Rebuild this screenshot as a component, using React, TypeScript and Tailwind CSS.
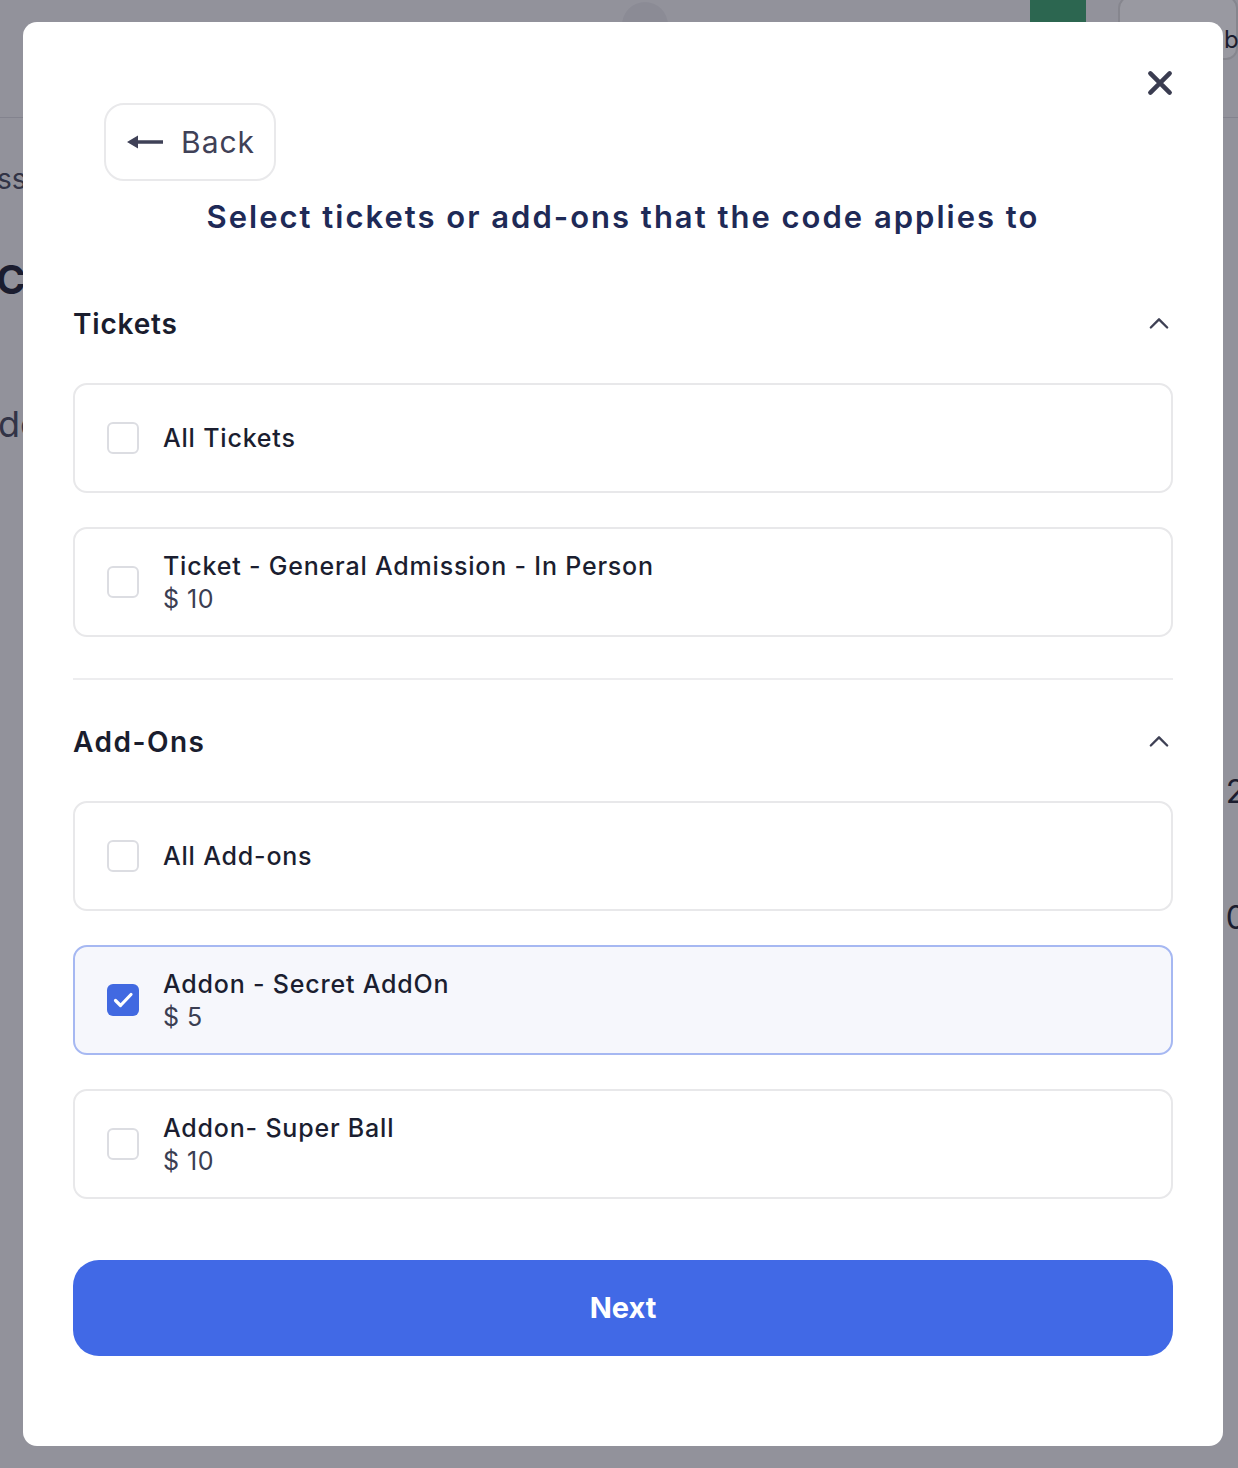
import React from "react";

const font = { fontFamily: "Inter, 'Noto Sans', sans-serif" };

function Checkbox({ checked }: { checked: boolean }) {
  return checked ? (
    <div className="w-8 h-8 rounded-[6px] bg-[#4169e1] flex items-center justify-center shrink-0">
      <svg width="32" height="32" viewBox="0 0 32 32" fill="none" stroke="white" strokeWidth="3.2" strokeLinecap="round" strokeLinejoin="round">
        <path d="M8.5 16.5l5 5L24 10.5" />
      </svg>
    </div>
  ) : (
    <div className="w-8 h-8 rounded-[6px] border-2 border-[#dcdde2] bg-white shrink-0" />
  );
}

function Option({ title, price, checked }: { title: string; price?: string; checked?: boolean }) {
  return (
    <div
      className={
        "h-[110px] rounded-[14px] border-2 flex items-center px-[32px] gap-[24px] " +
        (checked ? "border-[#a6b8f2] bg-[#f6f7fc]" : "border-[#e8e8ea] bg-white")
      }
    >
      <Checkbox checked={!!checked} />
      <div className="flex flex-col">
        <div className="text-[25px] leading-[34px] font-medium text-[#1b1e30] tracking-[0.8px]">{title}</div>
        {price && <div className="text-[25px] leading-[32px] text-[#3b3e52] tracking-[0.5px]">{price}</div>}
      </div>
    </div>
  );
}

function Chevron() {
  return (
    <svg width="28" height="28" viewBox="0 0 24 24" fill="none" stroke="#3e4054" strokeWidth="2" strokeLinecap="round" strokeLinejoin="round">
      <path d="M5 15l7-7 7 7" />
    </svg>
  );
}

export default function App() {
  return (
    <div className="relative w-[1238px] h-[1468px] bg-[#f3f3f5] overflow-hidden" style={font}>
      {/* background page */}
      <div className="absolute inset-0 flex flex-col">
        <div className="h-[118px] border-b border-[#d8d8dc] flex items-start justify-end gap-8">
          <div className="w-[46px] h-[46px] rounded-full bg-[#e6e6ea] mt-[2px] mr-[330px]" />
          <div className="w-[56px] h-[60px] rounded-[10px] bg-[#3aa36c] -mt-[20px]" />
          <div className="w-[120px] h-[64px] rounded-[12px] border-2 border-[#ddd] -mt-[4px] bg-white pt-[24px] pl-[104px] text-[24px] text-[#1b1e30]">b</div>
        </div>
        <div className="flex justify-between">
          <div className="flex flex-col">
            <div className="pt-[40px] text-[28px] text-[#44475a] -ml-[3px]">ss</div>
            <div className="pt-[50px] text-[40px] font-bold text-[#1b1e30] -ml-[4px]">C</div>
            <div className="pt-[87px] text-[36px] text-[#44475a] -ml-[2px]">de</div>
          </div>
          <div className="flex flex-col text-[32px] text-[#1b1e30] mr-[-8px]">
            <div className="pt-[650px]">2</div>
            <div className="pt-[78px]">0</div>
          </div>
        </div>
      </div>
      <div className="absolute inset-0 bg-[#1c1d2e]/45" />
      {/* modal */}
      <div className="absolute left-[23px] top-[22px] w-[1200px] h-[1424px] bg-white rounded-[14px] px-[50px] pt-[42px]">
        <div className="flex justify-end -mt-[2px]">
          <svg width="42" height="42" viewBox="0 0 24 24" fill="none" stroke="#3a3c50" strokeWidth="2.6" strokeLinecap="round" className="-mr-[8px]">
            <path d="M6.5 6.5l11 11M17.5 6.5l-11 11" />
          </svg>
        </div>
        <div className="pl-[31px] -mt-[1px]">
          <button className="h-[78px] w-[172px] rounded-[20px] border-2 border-[#e9e9eb] bg-white flex items-center gap-[17px] pl-[20px]">
            <svg width="38" height="20" viewBox="0 0 38 20" fill="#3f4157">
              <path d="M1 10 L12 3.5 L12 8.2 L37 8.2 L37 11.8 L12 11.8 L12 16.5 Z" />
            </svg>
            <span className="text-[30px] text-[#3f4157] font-normal tracking-[1px]">Back</span>
          </button>
        </div>
        <h1 className="text-center text-[31px] leading-[40px] font-semibold text-[#1e2a57] mt-[16px] tracking-[2px]">
          Select tickets or add-ons that the code applies to
        </h1>

        <div className="mt-[67px] flex items-center justify-between h-[40px]">
          <div className="text-[28px] font-semibold text-[#1a1d2e] tracking-[0.8px]">Tickets</div>
          <Chevron />
        </div>
        <div className="mt-[39px] flex flex-col gap-[34px]">
          <Option title="All Tickets" />
          <Option title="Ticket - General Admission - In Person" price="$ 10" />
        </div>
        <div className="mt-[41px] border-t-2 border-[#ededef]" />

        <div className="mt-[42px] flex items-center justify-between h-[40px]">
          <div className="text-[28px] font-semibold text-[#1a1d2e] tracking-[1.5px]">Add-Ons</div>
          <Chevron />
        </div>
        <div className="mt-[39px] flex flex-col gap-[34px]">
          <Option title="All Add-ons" />
          <Option title="Addon - Secret AddOn" price="$ 5" checked />
          <Option title="Addon- Super Ball" price="$ 10" />
        </div>

        <button className="mt-[61px] w-full h-[96px] rounded-[26px] bg-[#4169e6] text-white text-[29px] font-bold">
          Next
        </button>
      </div>
    </div>
  );
}
